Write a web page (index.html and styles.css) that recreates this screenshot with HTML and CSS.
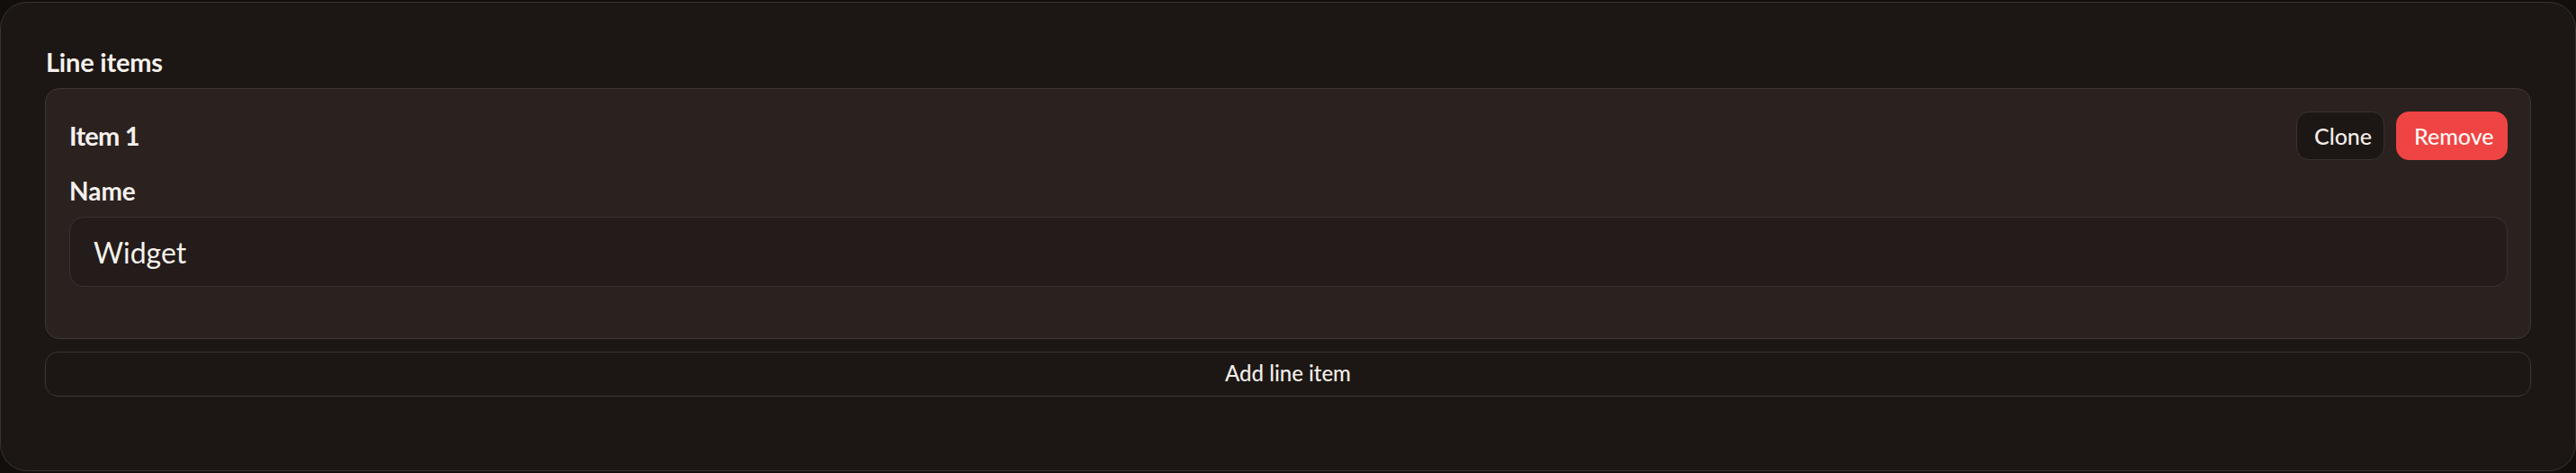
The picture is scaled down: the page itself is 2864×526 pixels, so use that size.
FILE: index.html
```html
<!DOCTYPE html>
<html lang="en">
<head>
<meta charset="utf-8">
<title>Line items</title>
<link rel="stylesheet" href="styles.css">
</head>
<body>
<form class="card">
  <h2 class="section-title">Line items</h2>
  <div class="item">
    <div class="item-head">
      <h3 class="item-title">Item 1</h3>
      <div class="item-actions">
        <button type="button" class="btn btn-clone">Clone</button>
        <button type="button" class="btn btn-remove">Remove</button>
      </div>
    </div>
    <label class="field-label" for="name1">Name</label>
    <input id="name1" class="field-input" type="text" value="Widget">
  </div>
  <button type="button" class="btn-add">Add line item</button>
</form>
</body>
</html>
```
FILE: styles.css
```css
* { box-sizing: border-box; }
html, body { margin: 0; background: #120e0c; }
body {
  padding-top: 2px;
  font-family: Lato, "Noto Sans", sans-serif;
  color: #f6f1ec;
}
.card {
  display: flex;
  flex-direction: column;
  height: 522px;
  margin: 0;
  padding: 48px 49px 0 49px;
  background: #1c1714;
  border: 1px solid #3a322f;
  border-radius: 30px;
}
.section-title {
  margin: 0 0 11px 1px;
  font-size: 29px;
  line-height: 36px;
  font-weight: 700;
  letter-spacing: -0.2px;
}
.item {
  display: flex;
  flex-direction: column;
  height: 279px;
  padding: 25px 25px 0 26px;
  background: #2b2220;
  border: 1px solid #3f3633;
  border-radius: 16px;
}
.item-head {
  display: flex;
  align-items: center;
  justify-content: space-between;
  height: 54px;
}
.item-title {
  margin: 0;
  font-size: 29px;
  line-height: 36px;
  font-weight: 700;
  letter-spacing: -0.8px;
}
.item-actions {
  display: flex;
  gap: 13px;
}
.btn {
  height: 54px;
  padding: 0 19px;
  border-radius: 14px;
  font-family: inherit;
  font-size: 25px;
  font-weight: 500;
  color: #f3ede8;
  cursor: pointer;
}
.btn-clone {
  width: 98px;
  background: #1c1714;
  border: 1px solid #3a322f;
}
.btn-remove {
  width: 124px;
  background: #ef4444;
  border: 1px solid #ef4444;
  color: #fff8f4;
}
.field-label {
  display: block;
  margin-top: 17px;
  font-size: 28px;
  line-height: 34px;
  font-weight: 700;
}
.field-input {
  display: block;
  width: 100%;
  height: 78px;
  margin-top: 12px;
  padding: 0 26px;
  background: #231c1a;
  border: 1px solid #3a322f;
  border-radius: 16px;
  font-family: inherit;
  font-size: 32px;
  font-weight: 400;
  color: #f6f1ec;
  outline: none;
}
.btn-add {
  height: 50px;
  margin-top: 14px;
  padding: 0 0 3px 0;
  background: #1c1714;
  border: 1px solid #3f3633;
  border-radius: 14px;
  font-family: inherit;
  font-size: 24px;
  font-weight: 500;
  color: #f3ede8;
  cursor: pointer;
}
```
